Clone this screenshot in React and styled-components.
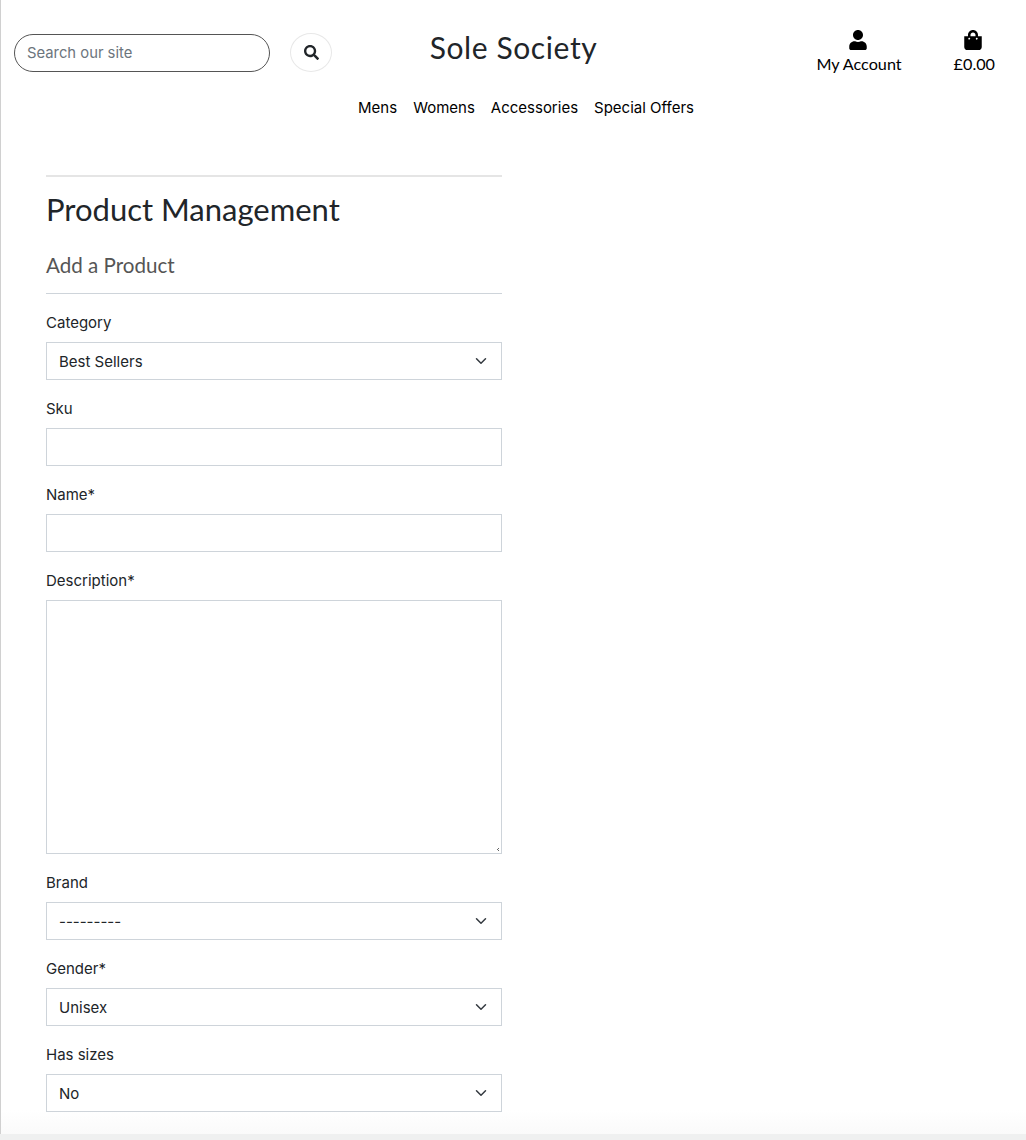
import styled, { createGlobalStyle } from "styled-components";
import { FaSearch, FaUser, FaShoppingBag } from "react-icons/fa";

const GlobalStyle = createGlobalStyle`
  html, body {
    margin: 0;
    height: 100%;
    background: #fff;
    overflow: hidden;
  }
  * {
    box-sizing: border-box;
  }
`;

const chevron =
  "data:image/svg+xml,%3csvg xmlns='http://www.w3.org/2000/svg' viewBox='0 0 16 16'%3e%3cpath fill='none' stroke='%23343a40' stroke-linecap='round' stroke-linejoin='round' stroke-width='2' d='M2 5l6 6 6-6'/%3e%3c/svg%3e";

const grip =
  "data:image/svg+xml,%3csvg xmlns='http://www.w3.org/2000/svg' width='15' height='15'%3e%3cpath fill='%23666' d='M12 10h1v1h-1zM11 11h1v1h-1zM12 12h1v1h-1z'/%3e%3c/svg%3e";

const navLinks = ["Mens", "Womens", "Accessories", "Special Offers"];

const App = () => {
  return (
    <Page>
      <GlobalStyle />
      <Content>
        <TopBar>
          <SearchForm>
            <SearchInput placeholder='Search our site' />
            <SearchButton type='button'>
              <FaSearch size={15} />
            </SearchButton>
          </SearchForm>
          <Logo>Sole Society</Logo>
          <Actions>
            <Action>
              <FaUser size={20} />
              <span>My Account</span>
            </Action>
            <Action>
              <FaShoppingBag size={20} />
              <span>£0.00</span>
            </Action>
          </Actions>
        </TopBar>
        <Nav>
          {navLinks.map((item) => {
            return <NavLink key={item}>{item}</NavLink>;
          })}
        </Nav>
        <Main>
          <Column>
            <TopRule />
            <Heading>Product Management</Heading>
            <SubHeading>Add a Product</SubHeading>
            <Rule />
            <Field>
              <Label>Category</Label>
              <Select defaultValue='Best Sellers'>
                <option>Best Sellers</option>
              </Select>
            </Field>
            <Field>
              <Label>Sku</Label>
              <Input />
            </Field>
            <Field>
              <Label>Name*</Label>
              <Input />
            </Field>
            <Field>
              <Label>Description*</Label>
              <TextArea />
            </Field>
            <Field>
              <Label>Brand</Label>
              <Select defaultValue='---------'>
                <option>---------</option>
              </Select>
            </Field>
            <Field>
              <Label>Gender*</Label>
              <Select defaultValue='Unisex'>
                <option>Unisex</option>
              </Select>
            </Field>
            <Field>
              <Label>Has sizes</Label>
              <Select defaultValue='No'>
                <option>No</option>
              </Select>
            </Field>
          </Column>
        </Main>
      </Content>
      <BottomStrip />
    </Page>
  );
};

export default App;

const Page = styled.div`
  height: 1140px;
  display: flex;
  flex-direction: column;
  font-family: Inter, "Liberation Sans", sans-serif;
  color: #212529;
`;

const Content = styled.div`
  flex: 1;
  min-height: 0;
  overflow: hidden;
  border-left: 1px solid #d0d0d0;
  background: linear-gradient(to bottom, #fff calc(100% - 24px), #fafafa);
`;

const BottomStrip = styled.div`
  height: 6px;
  background: #eff0f0;
`;

const TopBar = styled.header`
  display: grid;
  grid-template-columns: 1fr auto 1fr;
  align-items: start;
  height: 96px;
  padding: 33px 13px 0 13px;
`;

const SearchForm = styled.form`
  display: flex;
  align-items: center;
  gap: 20px;
`;

const SearchInput = styled.input`
  width: 256px;
  height: 38px;
  padding: 1px 12px 0;
  border: 1px solid #555;
  border-radius: 19px;
  font: 400 14.8px Inter, "Liberation Sans", sans-serif;
  outline: none;
  &::placeholder {
    color: #6c757d;
    opacity: 1;
  }
`;

const SearchButton = styled.button`
  width: 42px;
  height: 39px;
  padding: 0;
  display: flex;
  align-items: center;
  justify-content: center;
  background: #fff;
  border: 1px solid #e8e8e8;
  border-radius: 50%;
  color: #212529;
`;

const Logo = styled.div`
  margin-top: -2px;
  font-family: Lato, "Open Sans", sans-serif;
  font-size: 30px;
  line-height: 32px;
  letter-spacing: 0.6px;
  color: #212529;
`;

const Actions = styled.div`
  display: flex;
  justify-content: flex-end;
  gap: 52px;
  margin-top: -3px;
  padding-right: 18px;
`;

const Action = styled.a`
  display: flex;
  flex-direction: column;
  align-items: center;
  gap: 4px;
  color: #000;
  font-family: Lato, "Open Sans", sans-serif;
  font-size: 16.2px;
  line-height: 20px;
  svg {
    margin-right: 2px;
  }
`;

const Nav = styled.nav`
  display: flex;
  justify-content: center;
  gap: 16px;
  height: 24px;
  margin-bottom: 55px;
  padding-left: 25px;
`;

const NavLink = styled.a`
  font-size: 15px;
  line-height: 24px;
  color: #000;
`;

const Main = styled.main`
  padding: 0 45px;
`;

const Column = styled.div`
  width: 456px;
`;

const TopRule = styled.hr`
  margin: 0;
  border: 0;
  border-top: 2px solid #e5e5e5;
`;

const Heading = styled.h1`
  margin: 14px 0 0;
  font-family: Lato, "Open Sans", sans-serif;
  font-weight: 400;
  font-size: 31px;
  line-height: 36px;
  color: #212529;
`;

const SubHeading = styled.h2`
  margin: 26px 0 0;
  font-family: Lato, "Open Sans", sans-serif;
  font-weight: 400;
  font-size: 20.6px;
  line-height: 24px;
  color: #555;
`;

const Rule = styled.hr`
  margin: 16px 0 0;
  border: 0;
  border-top: 1px solid #ced4da;
`;

const Field = styled.div`
  margin-top: 17px;
  display: flex;
  flex-direction: column;
`;

const Label = styled.label`
  font-size: 15px;
  line-height: 24px;
  margin-bottom: 7px;
  color: #212529;
`;

const Input = styled.input`
  height: 38px;
  border: 1px solid #ced4da;
  background: #fff;
  outline: none;
`;

const Select = styled.select`
  appearance: none;
  height: 38px;
  padding: 0 36px 0 12px;
  border: 1px solid #ced4da;
  border-radius: 0;
  background: #fff url("${chevron}") no-repeat right 14px center / 12px 12px;
  font: 400 15px Inter, "Liberation Sans", sans-serif;
  color: #212529;
  outline: none;
`;

const TextArea = styled.textarea`
  display: block;
  height: 254px;
  border: 1px solid #ced4da;
  outline: none;
  resize: vertical;
  &::-webkit-resizer {
    background: url("${grip}") no-repeat right bottom;
  }
`;
